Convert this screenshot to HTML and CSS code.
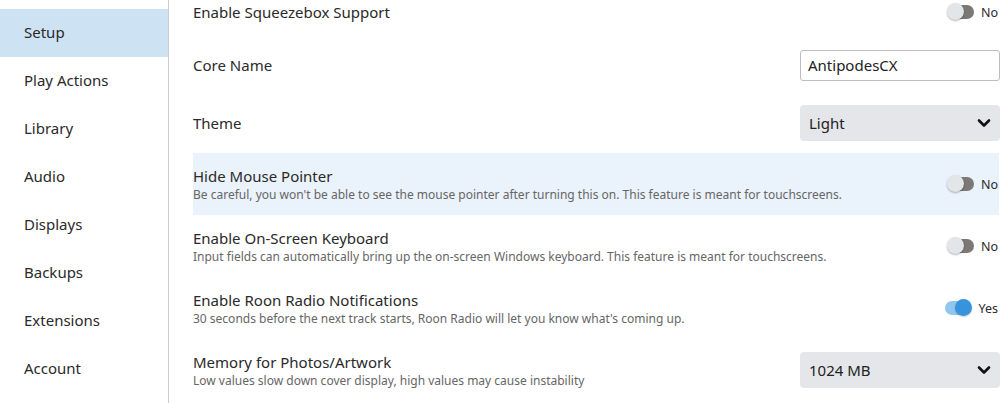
FILE: index.html
```html
<!DOCTYPE html>
<html>
<head>
<meta charset="utf-8">
<link rel="stylesheet" href="styles.css">
</head>
<body>
<div class="app">
  <nav class="sidebar">
    <div class="nav-item active">Setup</div>
    <div class="nav-item">Play Actions</div>
    <div class="nav-item">Library</div>
    <div class="nav-item">Audio</div>
    <div class="nav-item">Displays</div>
    <div class="nav-item">Backups</div>
    <div class="nav-item">Extensions</div>
    <div class="nav-item">Account</div>
  </nav>
  <main class="content">
    <div class="row row-first">
      <div class="text"><div class="title">Enable Squeezebox Support</div></div>
      <div class="switch"><span class="toggle"></span><span class="switch-label">No</span></div>
    </div>
    <div class="row row-input">
      <div class="text"><div class="title">Core Name</div></div>
      <div class="field">AntipodesCX</div>
    </div>
    <div class="row row-select">
      <div class="text"><div class="title">Theme</div></div>
      <div class="select"><span>Light</span><svg class="chev" width="14" height="10" viewBox="0 0 14 10"><path d="M2 2.5 L7 7.5 L12 2.5" fill="none" stroke="#111" stroke-width="2.6" stroke-linecap="round" stroke-linejoin="round"/></svg></div>
    </div>
    <div class="row row-desc highlighted">
      <div class="text"><div class="title">Hide Mouse Pointer</div><div class="desc">Be careful, you won't be able to see the mouse pointer after turning this on. This feature is meant for touchscreens.</div></div>
      <div class="switch"><span class="toggle"></span><span class="switch-label">No</span></div>
    </div>
    <div class="row row-desc">
      <div class="text"><div class="title">Enable On-Screen Keyboard</div><div class="desc">Input fields can automatically bring up the on-screen Windows keyboard. This feature is meant for touchscreens.</div></div>
      <div class="switch"><span class="toggle"></span><span class="switch-label">No</span></div>
    </div>
    <div class="row row-desc">
      <div class="text"><div class="title">Enable Roon Radio Notifications</div><div class="desc">30 seconds before the next track starts, Roon Radio will let you know what's coming up.</div></div>
      <div class="switch"><span class="toggle on"></span><span class="switch-label">Yes</span></div>
    </div>
    <div class="row row-desc">
      <div class="text"><div class="title">Memory for Photos/Artwork</div><div class="desc">Low values slow down cover display, high values may cause instability</div></div>
      <div class="select"><span>1024 MB</span><svg class="chev" width="14" height="10" viewBox="0 0 14 10"><path d="M2 2.5 L7 7.5 L12 2.5" fill="none" stroke="#111" stroke-width="2.6" stroke-linecap="round" stroke-linejoin="round"/></svg></div>
    </div>
  </main>
</div>
</body>
</html>
```
FILE: styles.css
```css
* { box-sizing: border-box; }
html, body { margin: 0; padding: 0; background: #fff; }
body {
  font-family: "Noto Sans", "Open Sans", sans-serif;
  color: #2a2a2a;
  width: 1005px;
  height: 403px;
  overflow: hidden;
}
.app {
  display: flex;
  height: 403px;
}
.sidebar {
  width: 169px;
  flex: none;
  border-right: 1px solid #cfcdca;
  padding-top: 9px;
}
.nav-item {
  height: 48px;
  display: flex;
  align-items: center;
  padding-left: 24px;
  padding-bottom: 2px;
  font-size: 15px;
  color: #2a2a2a;
}
.nav-item.active { background: #cde2f2; }
.content {
  flex: 1;
  padding: 0 6px 0 24px;
}
.row {
  display: flex;
  align-items: center;
  justify-content: space-between;
}
.row-first { height: 37px; padding-bottom: 13px; }
.row-input { height: 56px; }
.row-select { height: 60px; }
.row-desc { height: 62px; }
.highlighted { background: #eaf2fb; }
.title { font-size: 15px; line-height: 20px; color: #2a2a2a; }
.desc { font-size: 12px; line-height: 16px; color: #666; margin-top: 1px; }
.switch { display: flex; align-items: center; gap: 7px; padding-right: 1px; }
.switch-label { font-size: 12.5px; color: #2a2a2a; }
.toggle {
  position: relative;
  width: 27px;
  height: 18px;
  display: inline-block;
}
.toggle::before {
  content: "";
  position: absolute;
  left: 6px; top: 2px;
  width: 21px; height: 14px;
  border-radius: 7px;
  background: #7b7875;
}
.toggle::after {
  content: "";
  position: absolute;
  left: 0; top: 0;
  width: 17px; height: 17px;
  border-radius: 50%;
  background: #e3e6e9;
  box-shadow: 0 1px 2px rgba(0,0,0,0.3);
}
.toggle.on::before { left: 0; background: #91c6ef; }
.toggle.on::after { left: 10px; background: #3794dc; box-shadow: 0 1px 2px rgba(0,0,0,0.2); }
.field {
  width: 200px;
  height: 31px;
  border: 1px solid #bdbdbd;
  border-radius: 3px;
  display: flex;
  align-items: center;
  padding-left: 7px;
  font-size: 15px;
  color: #222;
  background: #fff;
  margin-right: -1px;
}
.select {
  width: 200px;
  height: 36px;
  background: #e4e6e9;
  border-radius: 4px;
  display: flex;
  align-items: center;
  justify-content: space-between;
  padding: 0 9px 0 9px;
  font-size: 15px;
  color: #222;
  margin-right: -1px;
}
.chev { display: block; }
```
